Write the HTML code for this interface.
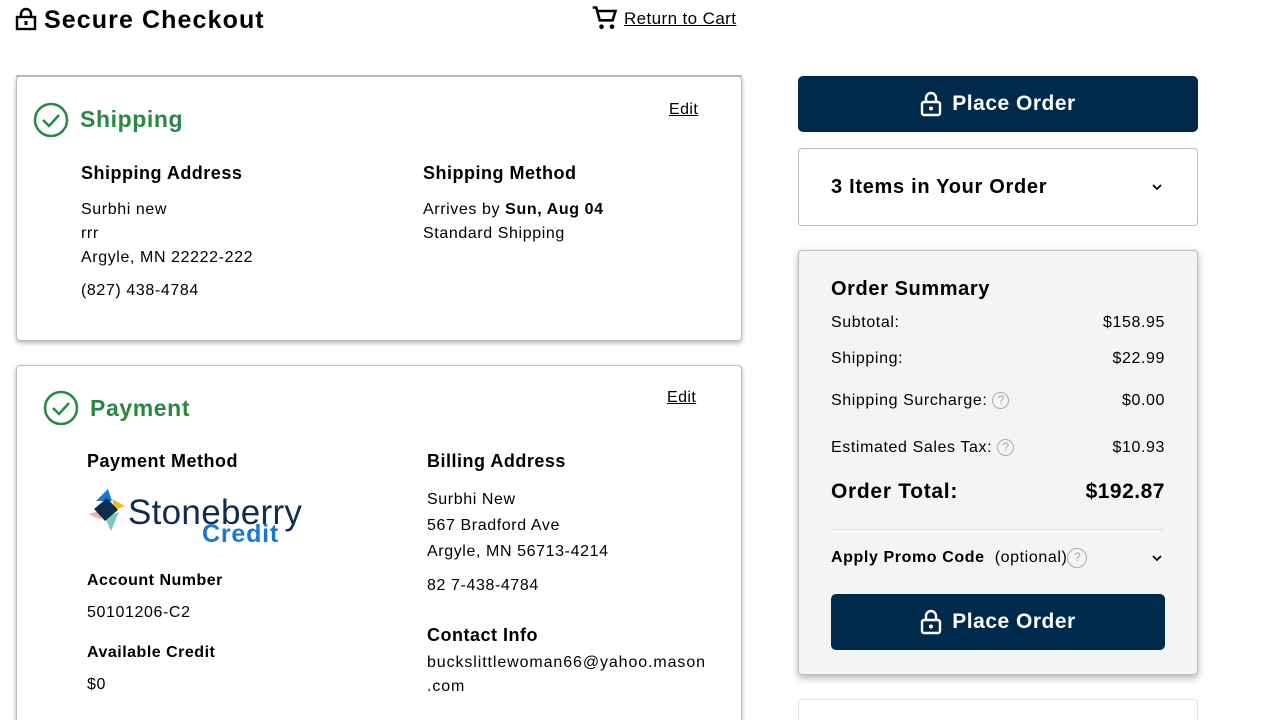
<!DOCTYPE html>
<html><head><meta charset="utf-8"><style>
*{margin:0;padding:0;box-sizing:border-box}
html,body{width:1280px;height:720px;overflow:hidden}
body{background:#fff;font-family:"Liberation Sans","DejaVu Sans",sans-serif;color:#000;position:relative}
.a{position:absolute;white-space:nowrap}
.b{font-weight:bold}
.card{position:absolute;border:1px solid #bdbdbd;border-radius:4px;background:#fff;box-shadow:0 2px 5px rgba(0,0,0,.3)}
.g{color:#2a8745;font-weight:bold;font-size:23px;letter-spacing:.6px}
.t{font-size:16px;letter-spacing:.6px}
.h{font-size:18px;font-weight:bold;letter-spacing:.5px}
.u{text-decoration:underline;font-size:16px;letter-spacing:.4px}
.btn{position:absolute;background:#002a4b;border-radius:5px;color:#fff;font-weight:bold;font-size:21px;display:flex;align-items:center;justify-content:center;gap:10px;letter-spacing:.5px}
.q{display:inline-block;width:17px;height:17px;border:1.5px solid #aaa;border-radius:50%;color:#aaa;font-size:12px;text-align:center;line-height:14px;vertical-align:middle;letter-spacing:0}
</style></head><body>
<svg class="a" style="left:15px;top:7px" width="22" height="24" viewBox="0 0 22 24"><rect x="2" y="10" width="18" height="12" fill="none" stroke="#000" stroke-width="2.4"/><path d="M6 10V7a5 5 0 0 1 10 0v3" fill="none" stroke="#000" stroke-width="2.4"/><rect x="9.5" y="14" width="3" height="4" fill="#000"/></svg>
<div class="a b" style="left:44px;top:6px;font-size:25px;letter-spacing:1.1px">Secure Checkout</div>
<svg class="a" style="left:591px;top:4px" width="28" height="28" viewBox="0 0 24 24"><path d="M1.5 3h3l3 11h11l2.5-8H6" fill="none" stroke="#000" stroke-width="2.2"/><circle cx="9" cy="19.5" r="2" fill="#000"/><circle cx="18" cy="19.5" r="2" fill="#000"/></svg>
<div class="a u" style="left:624px;top:9px;font-size:17px">Return to Cart</div>
<div class="a" style="left:16px;top:75px;width:726px;height:2px;background:#bdbdbd"></div>

<div class="card" style="left:16px;top:76px;width:726px;height:265px"></div>
<svg class="a" style="left:33px;top:102px" width="36" height="36" viewBox="0 0 36 36"><circle cx="18" cy="18" r="16" fill="none" stroke="#2a8745" stroke-width="2.5"/><path d="M10 18l6 6 10-11" fill="none" stroke="#2a8745" stroke-width="2.5"/></svg>
<div class="a g" style="left:80px;top:106px">Shipping</div>
<div class="a u" style="left:669px;top:101px">Edit</div>
<div class="a h" style="left:81px;top:163px">Shipping Address</div>
<div class="a t" style="left:81px;top:198px;line-height:24px">Surbhi new<br>rrr<br>Argyle, MN 22222-222</div>
<div class="a t" style="left:81px;top:282px">(827) 438-4784</div>
<div class="a h" style="left:423px;top:163px">Shipping Method</div>
<div class="a t" style="left:423px;top:198px;line-height:24px">Arrives by <b>Sun, Aug 04</b><br>Standard Shipping</div>

<div class="card" style="left:16px;top:365px;width:726px;height:380px"></div>
<svg class="a" style="left:43px;top:390px" width="36" height="36" viewBox="0 0 36 36"><circle cx="18" cy="18" r="16" fill="none" stroke="#2a8745" stroke-width="2.5"/><path d="M10 18l6 6 10-11" fill="none" stroke="#2a8745" stroke-width="2.5"/></svg>
<div class="a g" style="left:90px;top:395px">Payment</div>
<div class="a u" style="left:667px;top:389px">Edit</div>
<div class="a h" style="left:87px;top:451px">Payment Method</div>
<svg class="a" style="left:87px;top:488px" width="40" height="44" viewBox="0 0 40 44"><path d="M1 26l12-3 2 9z" fill="#f0b0b0"/><path d="M18 30l14-6-8 19z" fill="#7ccbb8"/><path d="M9 13l12-12 4 12z" fill="#1a78d0"/><path d="M25 11l13 7-10 4z" fill="#f5b820"/><path d="M7 21l13-11 11 12-13 11z" fill="#102d50"/></svg>
<div class="a" style="left:128px;top:493px;font-size:35px;color:#102d50;letter-spacing:.3px">Stoneberry</div>
<div class="a b" style="left:202px;top:520px;font-size:25px;color:#1a78d0;letter-spacing:.8px">Credit</div>
<div class="a b" style="left:87px;top:572px;font-size:16px;letter-spacing:.5px">Account Number</div>
<div class="a t" style="left:87px;top:604px">50101206-C2</div>
<div class="a b" style="left:87px;top:644px;font-size:16px;letter-spacing:.5px">Available Credit</div>
<div class="a t" style="left:87px;top:676px">$0</div>
<div class="a h" style="left:427px;top:451px">Billing Address</div>
<div class="a t" style="left:427px;top:487px;line-height:26px">Surbhi New<br>567 Bradford Ave<br>Argyle, MN 56713-4214</div>
<div class="a t" style="left:427px;top:577px">82 7-438-4784</div>
<div class="a h" style="left:427px;top:625px">Contact Info</div>
<div class="a t" style="left:427px;top:651px;line-height:24px;letter-spacing:.9px">buckslittlewoman66@yahoo.mason<br>.com</div>

<div class="btn" style="left:798px;top:76px;width:400px;height:56px"><svg width="22" height="26" viewBox="0 0 22 26"><rect x="2" y="11" width="18" height="13" rx="2" fill="none" stroke="#fff" stroke-width="2.4"/><path d="M6 11V7a5 5 0 0 1 10 0v4" fill="none" stroke="#fff" stroke-width="2.4"/><circle cx="11" cy="17.5" r="2" fill="#fff"/></svg>Place Order</div>
<div class="card" style="left:798px;top:148px;width:400px;height:78px;box-shadow:none"></div>
<div class="a h" style="left:831px;top:176px;font-size:20px;letter-spacing:.7px">3 Items in Your Order</div>
<svg class="a" style="left:1151px;top:182px" width="12" height="10" viewBox="0 0 12 10"><path d="M2 3l4 4 4-4" fill="none" stroke="#000" stroke-width="1.8"/></svg>

<div class="card" style="left:798px;top:250px;width:400px;height:425px;background:#f4f4f4;box-shadow:0 3px 8px rgba(0,0,0,.3)"></div>
<div class="a h" style="left:831px;top:278px;font-size:20px;letter-spacing:.6px">Order Summary</div>
<div class="a t" style="left:831px;top:314px">Subtotal:</div><div class="a t" style="right:115px;top:314px">$158.95</div>
<div class="a t" style="left:831px;top:350px">Shipping:</div><div class="a t" style="right:115px;top:350px">$22.99</div>
<div class="a t" style="left:831px;top:392px">Shipping Surcharge: <span class="q">?</span></div><div class="a t" style="right:115px;top:392px">$0.00</div>
<div class="a t" style="left:831px;top:439px">Estimated Sales Tax: <span class="q">?</span></div><div class="a t" style="right:115px;top:439px">$10.93</div>
<div class="a b" style="left:831px;top:480px;font-size:21px;letter-spacing:.7px">Order Total:</div><div class="a b" style="right:115px;top:480px;font-size:21px;letter-spacing:.5px">$192.87</div>
<div class="a" style="left:831px;top:529px;width:334px;height:1px;background:#e0e4ea"></div>
<div class="a t" style="left:831px;top:548px"><b>Apply Promo Code</b>&nbsp; (optional)<span class="q" style="width:20px;height:20px;line-height:17px">?</span></div>
<svg class="a" style="left:1151px;top:553px" width="12" height="10" viewBox="0 0 12 10"><path d="M2 3l4 4 4-4" fill="none" stroke="#000" stroke-width="1.8"/></svg>
<div class="btn" style="left:831px;top:594px;width:334px;height:56px"><svg width="22" height="26" viewBox="0 0 22 26"><rect x="2" y="11" width="18" height="13" rx="2" fill="none" stroke="#fff" stroke-width="2.4"/><path d="M6 11V7a5 5 0 0 1 10 0v4" fill="none" stroke="#fff" stroke-width="2.4"/><circle cx="11" cy="17.5" r="2" fill="#fff"/></svg>Place Order</div>
<div class="card" style="left:798px;top:699px;width:400px;height:40px;border-color:#e0e4ea;box-shadow:none"></div>
</body></html>
